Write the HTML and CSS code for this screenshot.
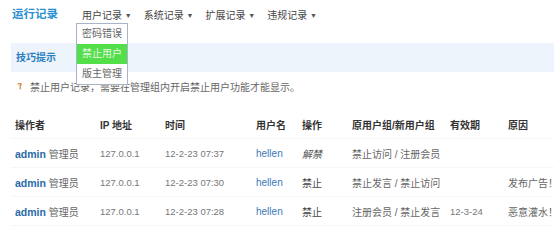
FILE: index.html
```html
<!DOCTYPE html>
<html lang="zh-CN">
<head>
<meta charset="utf-8">
<title>运行记录</title>
<link rel="stylesheet" href="styles.css">
</head>
<body>
<div class="page">
  <div class="topbar">
    <h1 class="title">运行记录</h1>
    <ul class="nav">
      <li class="nav-item menu">用户记录 <span class="caret">▼</span>
        <ul class="dropdown">
          <li class="dd-item">密码错误</li>
          <li class="dd-item active">禁止用户</li>
          <li class="dd-item">版主管理</li>
        </ul>
      </li>
      <li class="nav-item">系统记录 <span class="caret">▼</span></li>
      <li class="nav-item">扩展记录 <span class="caret">▼</span></li>
      <li class="nav-item">违规记录 <span class="caret">▼</span></li>
    </ul>
  </div>
  <div class="tipbar">技巧提示</div>
  <div class="tip">
    <svg class="tip-icon" width="5" height="7" viewBox="0 0 5 7"><path d="M0.5 1.2 L3.6 0.4 L4.3 1.6 L3.2 2.4 L3.2 6.6" fill="none" stroke="#d08a3a" stroke-width="1.2"/></svg>
    <span>禁止用户记录，需要在管理组内开启禁止用户功能才能显示。</span>
  </div>
  <table class="log">
    <colgroup>
      <col class="c1"><col class="c2"><col class="c3"><col class="c4"><col class="c5"><col class="c6"><col class="c7"><col class="c8">
    </colgroup>
    <thead>
      <tr><th>操作者</th><th>IP 地址</th><th>时间</th><th>用户名</th><th>操作</th><th>原用户组/新用户组</th><th>有效期</th><th>原因</th></tr>
    </thead>
    <tbody>
      <tr><td><b class="admin">admin</b> 管理员</td><td class="num">127.0.0.1</td><td class="num">12-2-23 07:37</td><td class="user">hellen</td><td class="op unban">解禁</td><td>禁止访问 / 注册会员</td><td class="num"></td><td></td></tr>
      <tr><td><b class="admin">admin</b> 管理员</td><td class="num">127.0.0.1</td><td class="num">12-2-23 07:30</td><td class="user">hellen</td><td class="op">禁止</td><td>禁止发言 / 禁止访问</td><td class="num"></td><td>发布广告！</td></tr>
      <tr><td><b class="admin">admin</b> 管理员</td><td class="num">127.0.0.1</td><td class="num">12-2-23 07:28</td><td class="user">hellen</td><td class="op">禁止</td><td>注册会员 / 禁止发言</td><td class="num">12-3-24</td><td>恶意灌水！</td></tr>
    </tbody>
  </table>
</div>
</body>
</html>
```
FILE: styles.css
```css
html, body {
  margin: 0;
  padding: 0;
  background: #ffffff;
  overflow: hidden;
}
body {
  font-family: "Liberation Sans", "Noto Sans CJK SC", sans-serif;
  font-size: 10px;
  color: #666;
  width: 554px;
  height: 233px;
}
.page {
  width: 554px;
  height: 233px;
  overflow: hidden;
}
.topbar {
  display: flex;
  align-items: flex-start;
  height: 43px;
  padding-left: 12px;
  box-sizing: border-box;
}
.title {
  margin: 6px 0 0 0;
  font-size: 11.5px;
  line-height: 16px;
  font-weight: bold;
  color: #2a8fd0;
}
.nav {
  list-style: none;
  margin: 8px 0 0 24px;
  padding: 0;
  display: flex;
  gap: 12px;
}
.nav-item {
  position: relative;
  line-height: 16px;
  height: 16px;
  font-size: 10px;
  color: #444;
  white-space: nowrap;
}
.caret {
  font-size: 7px;
  vertical-align: 1px;
  color: #555;
}
.dropdown {
  position: absolute;
  top: 15px;
  left: -6px;
  width: 50px;
  margin: 0;
  padding: 0;
  list-style: none;
  background: #fff;
  border: 1px solid #a7b5c6;
  z-index: 5;
}
.dd-item {
  height: 20px;
  line-height: 20px;
  text-align: center;
  color: #666;
  font-size: 10px;
}
.dd-item.active {
  background: #52df4a;
  color: #e6f5e3;
}
.tipbar {
  margin-left: 11px;
  height: 29px;
  line-height: 29px;
  padding-left: 5px;
  background: #eef4fb;
  font-weight: bold;
  color: #2a7fc0;
  font-size: 10px;
}
.tip {
  display: flex;
  align-items: center;
  height: 28px;
  padding-left: 17px;
  color: #666;
  font-size: 10px;
}
.tip-icon {
  margin-right: 8px;
  margin-top: 1px;
}
.log {
  margin-top: 10px;
  margin-left: 11px;
  border-collapse: collapse;
  table-layout: fixed;
  width: 600px;
}
.c1 { width: 85px; }
.c2 { width: 65px; }
.c3 { width: 91px; }
.c4 { width: 46px; }
.c5 { width: 50px; }
.c6 { width: 98px; }
.c7 { width: 58px; }
.c8 { width: 107px; }
.log th, .log td {
  height: 28px;
  padding: 0 0 0 4px;
  text-align: left;
  white-space: nowrap;
  overflow: hidden;
  font-size: 10px;
  border-bottom: 1px solid #f5f7f9;
}
.log th {
  font-weight: bold;
  color: #333;
}
.log td {
  color: #666;
}
.log td.num {
  font-size: 9.5px;
  color: #777;
}
.admin {
  color: #2a6aa8;
  font-size: 10.5px;
}
.log td.user {
  color: #3a78b8;
}
.log td.op {
  color: #444;
}
.log td.op.unban {
  font-style: italic;
  color: #555;
}
```
